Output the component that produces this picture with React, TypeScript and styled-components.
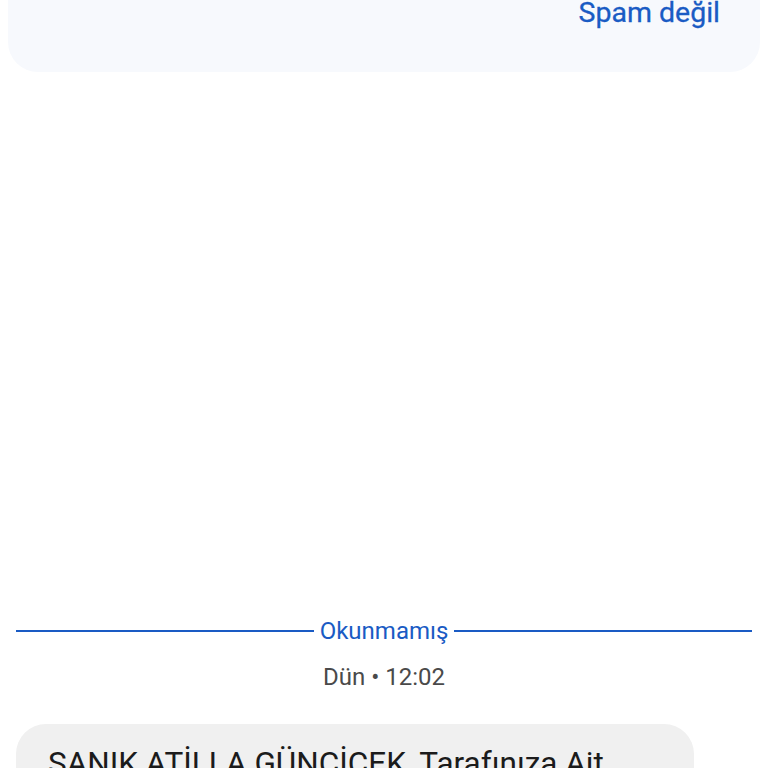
import React from "react";
import styled, { createGlobalStyle } from "styled-components";

const Global = createGlobalStyle`
  html, body {
    margin: 0;
    padding: 0;
    background: #fff;
    font-family: Roboto, "Noto Sans", sans-serif;
  }
`;

const Page = styled.div`
  width: 768px;
  height: 768px;
  overflow: hidden;
`;

const SpamCard = styled.div`
  margin: 0 8px;
  height: 72px;
  background-color: #f7f9fd;
  border-radius: 0 0 30px 30px;
  display: flex;
  justify-content: flex-end;
  align-items: flex-start;
  padding-right: 40px;
  box-sizing: border-box;
`;

const SpamButton = styled.div`
  color: #1a5bc4;
  font-size: 28.5px;
  line-height: 30px;
  font-weight: 400;
  -webkit-text-stroke: 0.3px #1a5bc4;
  margin-top: -2px;
`;

const Spacer = styled.div`
  height: 544px;
`;

const Divider = styled.div`
  height: 30px;
  padding: 0 16px;
  display: flex;
  align-items: center;
  gap: 6px;
`;

const Line = styled.div`
  flex: 1;
  height: 2px;
  background-color: #1a5bc4;
`;

const DividerLabel = styled.span`
  color: #1a5bc4;
  font-size: 24px;
  line-height: 30px;
`;

const Stamp = styled.div`
  margin-top: 16px;
  text-align: center;
  color: #4a4a4a;
  font-size: 24px;
  line-height: 30px;
`;

const Bubble = styled.div`
  margin: 32px 0 0 16px;
  width: 678px;
  box-sizing: border-box;
  background-color: #f0f0f0;
  border-radius: 30px;
  padding: 20px 32px;
  color: #1b1b1b;
  font-size: 31.5px;
  line-height: 40px;
`;

const App: React.FC = () => {
  return (
    <Page>
      <Global />
      <SpamCard>
        <SpamButton>Spam değil</SpamButton>
      </SpamCard>
      <Spacer />
      <Divider>
        <Line />
        <DividerLabel>Okunmamış</DividerLabel>
        <Line />
      </Divider>
      <Stamp>Dün • 12:02</Stamp>
      <Bubble>
        SANIK ATİLLA GÜNÇİÇEK, Tarafınıza Ait Dosyanız Hakkında Mahkeme
        Kararı Çıkmıştır. Detaylar İçin Bağlantıya Tıklayınız.
      </Bubble>
    </Page>
  );
};

export default App;
